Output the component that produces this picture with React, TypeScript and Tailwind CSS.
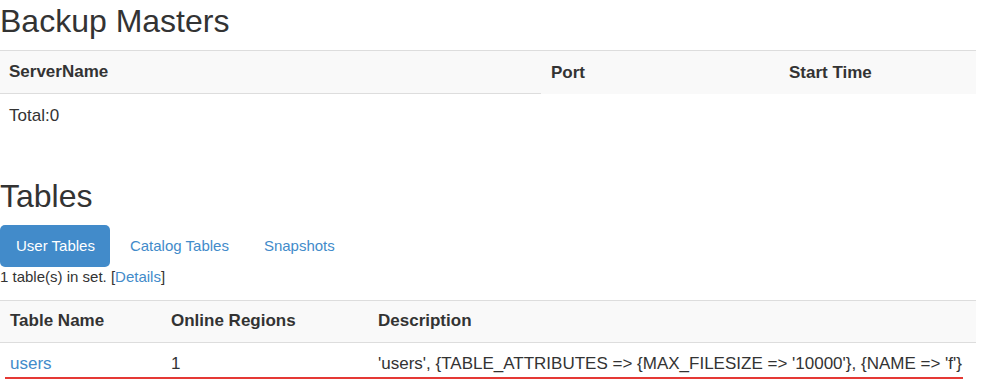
import React from "react";

const font = { fontFamily: '"Liberation Sans", Arial, sans-serif' };

function BackupMasters() {
  return (
    <section>
      <h2 className="mt-[5px] mb-[12px] text-[32px] leading-[33px] font-normal text-[#333]">
        Backup Masters
      </h2>
      <table className="table-fixed w-[976px] border-collapse text-[17px] text-[#333]">
        <colgroup>
          <col className="w-[541px]" />
          <col className="w-[238px]" />
          <col />
        </colgroup>
        <tbody>
          <tr className="bg-[#f9f9f9]">
            <th className="h-[43px] px-[9px] text-left font-bold border-t border-[#ddd]">ServerName</th>
            <th className="h-[43px] px-[10px] text-left font-bold border-t border-[#ddd]">Port</th>
            <th className="h-[43px] px-[10px] text-left font-bold border-t border-[#ddd]">Start Time</th>
          </tr>
          <tr>
            <td className="h-[43px] px-[9px] border-t border-[#ddd]">Total:0</td>
          </tr>
        </tbody>
      </table>
    </section>
  );
}

function Tabs() {
  const tabs = ["User Tables", "Catalog Tables", "Snapshots"];
  return (
    <ul className="flex mt-[12px]">
      {tabs.map((t, i) => (
        <li key={t} className={i > 0 ? "ml-[4px]" : ""}>
          <a
            href="#"
            className={`block h-[42px] pl-[16px] pr-[15px] text-[15px] leading-[42px] rounded-[5px] ${
              i === 0 ? "bg-[#428bca] text-white" : "text-[#428bca]"
            }`}
          >
            {t}
          </a>
        </li>
      ))}
    </ul>
  );
}

function UserTables() {
  return (
    <section>
      <h2 className="mt-[43px] text-[32px] leading-[33px] font-normal text-[#333]">Tables</h2>
      <Tabs />
      <p className="text-[15px] leading-[20px] text-[#333]">
        1 table(s) in set. [<a href="#" className="text-[#428bca]">Details</a>]
      </p>
      <div className="relative mt-[13px]">
        <table className="table-fixed w-[976px] border-collapse text-[17px] text-[#333]">
          <colgroup>
            <col className="w-[161px]" />
            <col className="w-[207px]" />
            <col />
          </colgroup>
          <tbody>
            <tr className="bg-[#f9f9f9]">
              <th className="h-[42px] px-[10px] text-left font-bold border-t border-[#ddd]">Table Name</th>
              <th className="h-[42px] px-[10px] text-left font-bold border-t border-[#ddd]">Online Regions</th>
              <th className="h-[42px] px-[10px] text-left font-bold border-t border-[#ddd]">Description</th>
            </tr>
            <tr>
              <td className="h-[43px] px-[10px] border-t border-[#ddd]">
                <a href="#" className="text-[#428bca]">users</a>
              </td>
              <td className="h-[43px] px-[10px] border-t border-[#ddd]">1</td>
              <td className="h-[43px] px-[10px] border-t border-[#ddd] whitespace-nowrap">
                'users', {"{"}TABLE_ATTRIBUTES =&gt; {"{"}MAX_FILESIZE =&gt; '10000'{"}"}, {"{"}NAME =&gt; 'f'{"}"}
              </td>
            </tr>
          </tbody>
        </table>
        {/* red annotation line under the row */}
        <div className="absolute left-[5px] top-[77px] w-[958px] h-[2px] bg-[#e53935]" />
      </div>
    </section>
  );
}

export default function App() {
  return (
    <div className="w-[981px] h-[388px] bg-white overflow-hidden" style={font}>
      <BackupMasters />
      <UserTables />
    </div>
  );
}
